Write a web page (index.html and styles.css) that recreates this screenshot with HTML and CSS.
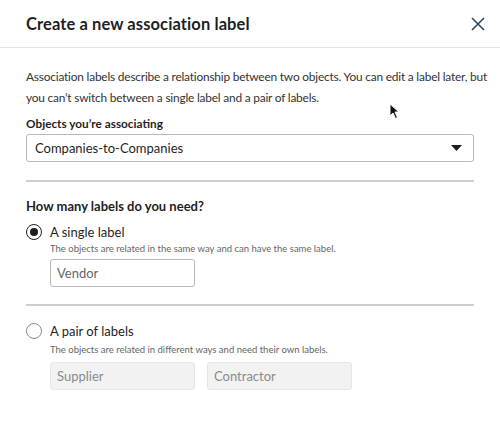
FILE: index.html
```html
<!DOCTYPE html>
<html>
<head>
<meta charset="utf-8">
<link rel="stylesheet" href="styles.css">
</head>
<body>
<div class="modal">
  <header class="head">
    <h1 class="title">Create a new association label</h1>
    <svg class="close" width="14" height="14" viewBox="0 0 14 14"><path d="M1 1 L13 13 M13 1 L1 13" stroke="#33475b" stroke-width="1.6" fill="none"/></svg>
  </header>
  <div class="body">
    <p class="intro">Association labels describe a relationship between two objects. You can edit a label later, but<br>you can’t switch between a single label and a pair of labels.</p>
    <div class="field-label">Objects you’re associating</div>
    <div class="select">
      <span>Companies-to-Companies</span>
      <svg width="11" height="6" viewBox="0 0 11 6"><path d="M0 0 H11 L5.5 6 Z" fill="#1f1f1f"/></svg>
    </div>
    <hr class="divider">
    <div class="question">How many labels do you need?</div>
    <div class="option">
      <span class="radio checked"></span>
      <span class="opt-title">A single label</span>
    </div>
    <div class="hint">The objects are related in the same way and can have the same label.</div>
    <div class="inputs">
      <div class="input">Vendor</div>
    </div>
    <hr class="divider second">
    <div class="option">
      <span class="radio"></span>
      <span class="opt-title">A pair of labels</span>
    </div>
    <div class="hint pair">The objects are related in different ways and need their own labels.</div>
    <div class="inputs pair">
      <div class="input disabled">Supplier</div>
      <div class="input disabled">Contractor</div>
    </div>
  </div>
  <svg class="cursor" width="12" height="17" viewBox="0 0 12 17"><path d="M1 1 L1 13 L4 10 L6.5 15.5 L8.5 14.5 L6 9 L10 9 Z" fill="#111" stroke="#fff" stroke-width="1"/></svg>
</div>
</body>
</html>
```
FILE: styles.css
```css
* { box-sizing: border-box; }
html, body { margin: 0; padding: 0; background: #fff; }
body { font-family: "Lato", "Open Sans", sans-serif; color: #1f1f1f; width: 500px; height: 430px; overflow: hidden; }
.modal { position: relative; width: 500px; height: 430px; }
.head { height: 48px; display: flex; align-items: center; justify-content: space-between; padding: 0 15px 0 26px; border-bottom: 1px solid #e3e3e3; }
.title { margin: 0; font-size: 16.5px; font-weight: 700; color: #1f1f1f; letter-spacing: 0.1px; }
.close { display: block; margin-top: 1px; }
.body { padding: 18px 26px 0 26px; }
.intro { margin: 0; font-size: 11.9px; letter-spacing: -0.2px; line-height: 21px; color: #333; white-space: nowrap; }
.field-label { margin-top: 8px; font-size: 11.8px; font-weight: 700; line-height: 16px; }
.select { margin-top: 2px; height: 28px; border: 1px solid #b8b8b8; border-radius: 3px; display: flex; align-items: center; justify-content: space-between; padding: 0 11px 0 8px; font-size: 13px; color: #1f1f1f; }
.divider { margin: 18px 0 0 0; border: 0; height: 2px; background: #cfcfcf; }
.divider.second { margin-top: 17px; }
.question { margin-top: 15px; font-size: 13px; font-weight: 700; line-height: 18px; }
.option { display: flex; align-items: center; gap: 8px; margin-top: 8px; height: 18px; }
.divider.second + .option { margin-top: 16px; }
.radio { width: 16px; height: 16px; border-radius: 50%; border: 1.3px solid #8a8a8a; background: #fff; display: flex; align-items: center; justify-content: center; }
.radio.checked { border-color: #1f1f1f; }
.radio.checked::after { content: ""; width: 8px; height: 8px; border-radius: 50%; background: #1f1f1f; }
.opt-title { font-size: 13px; color: #1f1f1f; }
.hint { margin: 1px 0 0 24px; font-size: 9.5px; line-height: 13px; color: #666; }
.hint.pair { margin-top: 3px; }
.inputs { display: flex; gap: 12px; margin: 4px 0 0 24px; }
.inputs.pair { margin-top: 6px; }
.input { width: 145px; height: 28px; border: 1px solid #b8b8b8; border-radius: 3px; display: flex; align-items: center; padding: 0 6px; font-size: 13px; color: #666; }
.input.disabled { background: #f2f2f2; border-color: #e6e6e6; color: #8a8a8a; }
.cursor { position: absolute; left: 389px; top: 103px; }
```
